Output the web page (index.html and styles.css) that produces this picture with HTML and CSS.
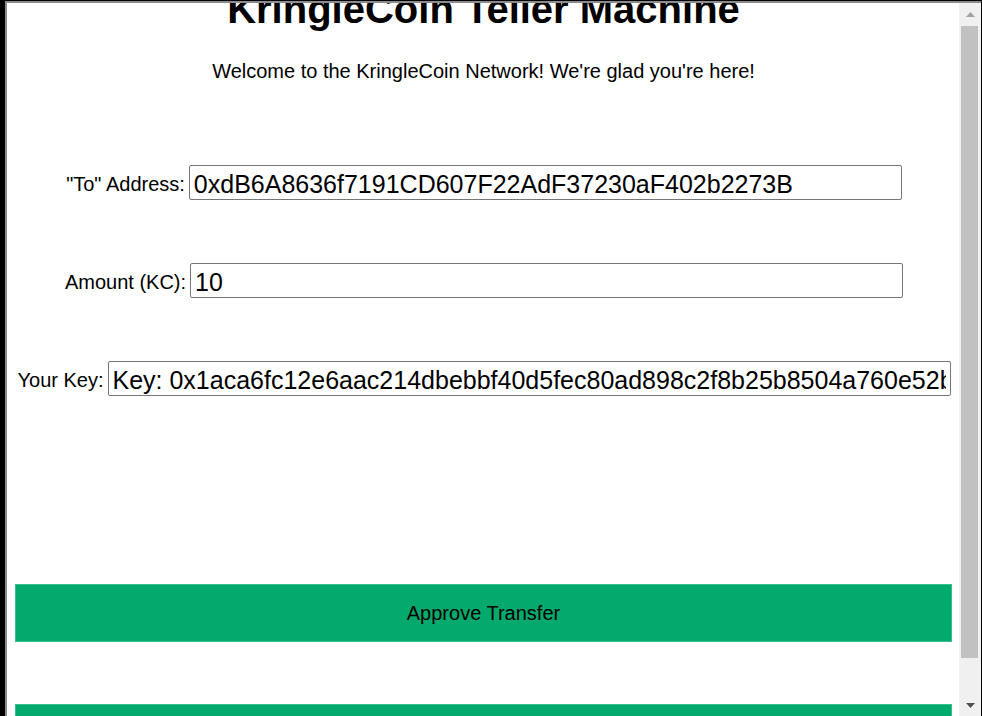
FILE: index.html
```html
<!DOCTYPE html>
<html>
<head>
<meta charset="utf-8">
<title>KringleCoin Teller Machine</title>
<link rel="stylesheet" href="styles.css">
</head>
<body>
<div class="frame">
  <div class="viewport">
    <div class="page">
      <h1 class="title">KringleCoin Teller Machine</h1>
      <p class="welcome">Welcome to the KringleCoin Network! We're glad you're here!</p>
      <div class="row row-first">
        <label class="label">"To" Address:</label>
        <input class="field field-main" type="text" value="0xdB6A8636f7191CD607F22AdF37230aF402b2273B">
      </div>
      <div class="row">
        <label class="label">Amount (KC):</label>
        <input class="field field-main" type="text" value="10">
      </div>
      <div class="row">
        <label class="label">Your Key:</label>
        <input class="field field-key" type="text" value="Key: 0x1aca6fc12e6aac214dbebbf40d5fec80ad898c2f8b25b8504a760e52bd3a47f1">
      </div>
      <button class="btn btn-approve">Approve Transfer</button>
      <button class="btn btn-next">Cancel</button>
    </div>
  </div>
  <div class="scrollbar">
    <div class="sb-btn">
      <svg width="9" height="5" viewBox="0 0 9 5"><polygon points="0,5 9,5 4.5,0" fill="#a3a3a3"/></svg>
    </div>
    <div class="sb-track">
      <div class="sb-thumb"></div>
    </div>
    <div class="sb-btn sb-btn-down">
      <svg width="9" height="5" viewBox="0 0 9 5"><polygon points="0,0 9,0 4.5,5" fill="#505050"/></svg>
    </div>
  </div>
</div>
</body>
</html>
```

FILE: styles.css
```css
html, body {
  margin: 0;
  padding: 0;
  width: 982px;
  height: 716px;
  overflow: hidden;
  background: #000;
}

.frame {
  box-sizing: border-box;
  margin: 1px 1px 0 5px;
  height: 715px;
  border-left: 2px solid #8c8c8c;
  border-top: 2px solid #8c8c8c;
  background: #fff;
  display: flex;
}

.viewport {
  flex: 1;
  overflow: hidden;
  background: #fff;
}

.page {
  margin-top: -17px;
  padding: 0 7px 0 8px;
  display: flex;
  flex-direction: column;
  font-family: "Liberation Sans", Arial, sans-serif;
  font-size: 20px;
  color: #000;
}

.title {
  margin: 0;
  font-size: 40px;
  line-height: 46px;
  font-weight: bold;
  text-align: center;
}

.welcome {
  margin: 28px 0 0;
  line-height: 23px;
  text-align: center;
}

.row {
  display: flex;
  justify-content: center;
  align-items: center;
  gap: 4px;
  height: 35px;
  margin-top: 63px;
  padding-left: 1px;
}

.row-first {
  margin-top: 82px;
}

.label {
  line-height: 23px;
  padding-top: 4px;
}

.field {
  box-sizing: border-box;
  height: 35px;
  margin: 0;
  padding: 4px 4px 0;
  border: 1px solid #767676;
  border-radius: 2px;
  font-family: "Liberation Sans", Arial, sans-serif;
  font-size: 25px;
  color: #000;
  background: #fff;
  outline: none;
}

.field-main {
  width: 713px;
}

.field-key {
  width: 843px;
}

.btn {
  box-sizing: border-box;
  width: 100%;
  height: 58px;
  margin: 0;
  padding-top: 1px;
  border: 1px solid #35c08e;
  background: #04aa6d;
  font-family: "Liberation Sans", Arial, sans-serif;
  font-size: 20px;
  color: #000;
  flex-shrink: 0;
}

.btn-approve {
  margin-top: 188px;
}

.btn-next {
  margin-top: 62px;
}

.scrollbar {
  width: 22px;
  background: #f0f0f0;
  display: flex;
  flex-direction: column;
  flex-shrink: 0;
}

.sb-btn {
  height: 22px;
  display: flex;
  align-items: center;
  justify-content: center;
  padding-left: 1px;
}

.sb-btn-down {
  height: 21px;
  align-items: center;
}

.sb-track {
  flex: 1;
  padding: 1px 3px 0 2px;
}

.sb-thumb {
  height: 632px;
  background: #c1c1c1;
}
```
